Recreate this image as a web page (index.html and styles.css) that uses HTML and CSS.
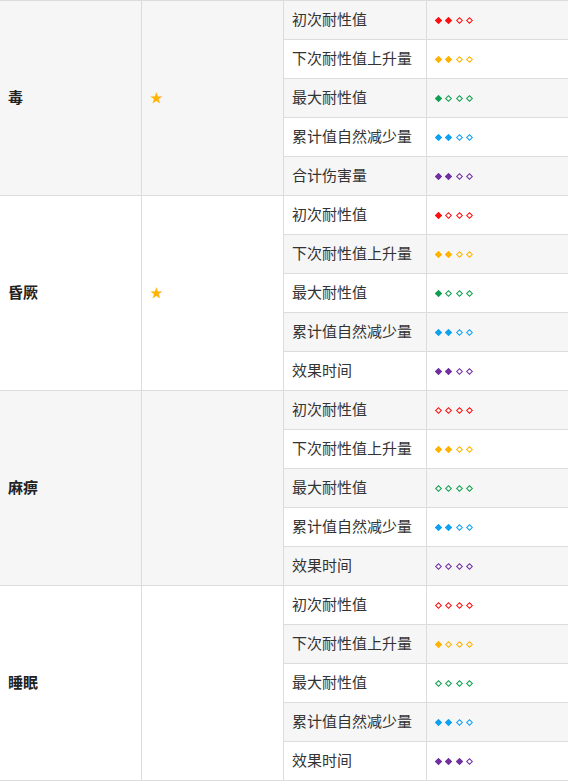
FILE: index.html
```html
<!DOCTYPE html>
<html lang="zh">
<head>
<meta charset="utf-8">
<link rel="stylesheet" href="styles.css">
</head>
<body>
<table class="tbl">
<colgroup><col class="c1"><col class="c2"><col class="c3"><col class="c4"></colgroup>
<tbody>
<tr><td rowspan="5" class="name">毒</td><td rowspan="5" class="star">★</td><td>初次耐性值</td><td class="dm r"><i class="f"></i><i class="f"></i><i></i><i></i></td></tr>
<tr><td>下次耐性值上升量</td><td class="dm y"><i class="f"></i><i class="f"></i><i></i><i></i></td></tr>
<tr><td>最大耐性值</td><td class="dm g"><i class="f"></i><i></i><i></i><i></i></td></tr>
<tr><td>累计值自然减少量</td><td class="dm b"><i class="f"></i><i class="f"></i><i></i><i></i></td></tr>
<tr><td>合计伤害量</td><td class="dm p"><i class="f"></i><i class="f"></i><i></i><i></i></td></tr>

<tr><td rowspan="5" class="name">昏厥</td><td rowspan="5" class="star">★</td><td>初次耐性值</td><td class="dm r"><i class="f"></i><i></i><i></i><i></i></td></tr>
<tr><td>下次耐性值上升量</td><td class="dm y"><i class="f"></i><i class="f"></i><i></i><i></i></td></tr>
<tr><td>最大耐性值</td><td class="dm g"><i class="f"></i><i></i><i></i><i></i></td></tr>
<tr><td>累计值自然减少量</td><td class="dm b"><i class="f"></i><i class="f"></i><i></i><i></i></td></tr>
<tr><td>效果时间</td><td class="dm p"><i class="f"></i><i class="f"></i><i></i><i></i></td></tr>

<tr><td rowspan="5" class="name">麻痹</td><td rowspan="5" class="star"></td><td>初次耐性值</td><td class="dm r"><i></i><i></i><i></i><i></i></td></tr>
<tr><td>下次耐性值上升量</td><td class="dm y"><i class="f"></i><i class="f"></i><i></i><i></i></td></tr>
<tr><td>最大耐性值</td><td class="dm g"><i></i><i></i><i></i><i></i></td></tr>
<tr><td>累计值自然减少量</td><td class="dm b"><i class="f"></i><i class="f"></i><i></i><i></i></td></tr>
<tr><td>效果时间</td><td class="dm p"><i></i><i></i><i></i><i></i></td></tr>

<tr><td rowspan="5" class="name">睡眠</td><td rowspan="5" class="star"></td><td>初次耐性值</td><td class="dm r"><i></i><i></i><i></i><i></i></td></tr>
<tr><td>下次耐性值上升量</td><td class="dm y"><i class="f"></i><i></i><i></i><i></i></td></tr>
<tr><td>最大耐性值</td><td class="dm g"><i></i><i></i><i></i><i></i></td></tr>
<tr><td>累计值自然减少量</td><td class="dm b"><i class="f"></i><i class="f"></i><i></i><i></i></td></tr>
<tr><td>效果时间</td><td class="dm p"><i class="f"></i><i class="f"></i><i class="f"></i><i></i></td></tr>
</tbody>
</table>
</body>
</html>
```
FILE: styles.css
```css
html, body {
  margin: 0;
  padding: 0;
  background: #fff;
}
body {
  font-family: "Noto Sans CJK SC", "Noto Sans", sans-serif;
  font-size: 15px;
  color: #333;
}
.tbl {
  border-collapse: collapse;
  table-layout: fixed;
  width: 569px;
  margin-left: -1px;
}
.c1 { width: 142px; }
.c2 { width: 142px; }
.c3 { width: 143px; }
.c4 { width: 142px; }
.tbl td {
  border: 1px solid #dcdcdc;
  height: 39px;
  padding: 0 8px 2px;
  box-sizing: border-box;
  vertical-align: middle;
  line-height: 20px;
  white-space: nowrap;
}
.tbl tr:nth-child(odd) td { background: #f6f6f6; }
.tbl tr:nth-child(even) td { background: #fff; }
.name { font-weight: bold; color: #222; }
.star { color: #ffb400; font-size: 13px; }
.tbl td.dm { font-size: 0; padding-bottom: 0; }
.dm i {
  display: inline-block;
  width: 5px;
  height: 5px;
  box-sizing: border-box;
  border: 1px solid currentColor;
  transform: rotate(45deg);
  margin: 0 4.3px 0 1px;
  vertical-align: middle;
}
.dm i.f { background: currentColor; }
.r { color: #ff1010; }
.y { color: #ffb300; }
.g { color: #10a050; }
.b { color: #10a0f0; }
.p { color: #7030a0; }
```
